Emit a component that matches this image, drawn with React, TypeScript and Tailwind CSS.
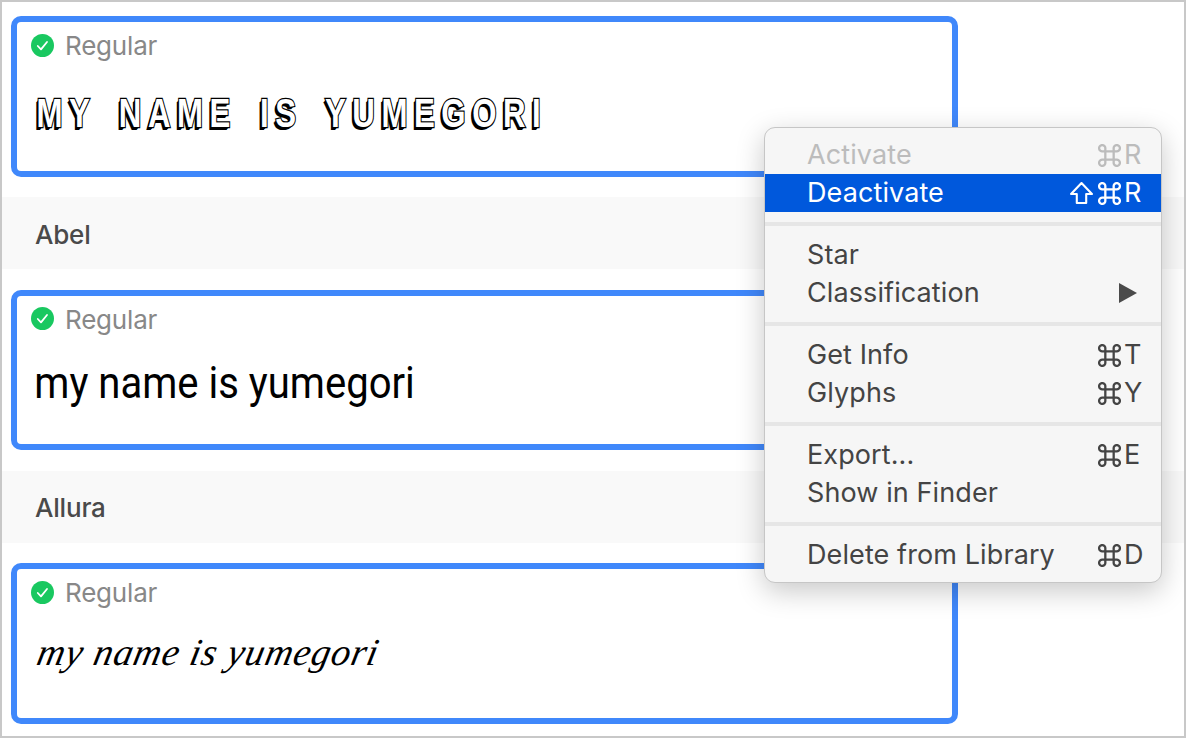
const ui = { fontFamily: 'Inter, "DejaVu Sans", sans-serif' };

function Check() {
  return (
    <svg width="23" height="23" viewBox="0 0 23 23" className="shrink-0">
      <circle cx="11.5" cy="11.5" r="11.5" fill="#19c860" />
      <path d="M6.8 12l3.2 3.4 6-7.4" fill="none" stroke="#fff" strokeWidth="1.8" strokeLinecap="round" strokeLinejoin="round" />
    </svg>
  );
}

function Card({ children }: { children: React.ReactNode }) {
  return (
    <div className="w-[947px] h-[160.5px] ml-[9px] border-[6px] border-[#4088fb] rounded-[10px] bg-white relative shrink-0">
      <div className="flex items-center gap-[11px] pl-[14px] pt-[7px]">
        <Check />
        <span className="text-[26px] leading-[30px] mt-[2px] text-[#888888] tracking-[-0.2px]">Regular</span>
      </div>
      {children}
    </div>
  );
}

function Header({ name }: { name: string }) {
  return (
    <div className="h-[72px] my-[20.5px] bg-[#f9f9f9] flex items-center pl-[33px] pt-[2px] text-[26px] font-medium text-[#4a4a4a] tracking-[-0.2px] shrink-0">
      {name}
    </div>
  );
}

function Row({ label, mods, k, state, arrow }: { label: string; mods?: string; k?: string; state?: 'disabled' | 'active'; arrow?: boolean }) {
  const color = state === 'disabled' ? 'text-[#bcbcbc]' : state === 'active' ? 'text-white bg-[#0058dc]' : 'text-[#444444]';
  return (
    <div className={`h-[38px] flex items-center justify-between pl-[42px] text-[27px] ${color}`}>
      <span className="tracking-[0.1px]">{label}</span>
      {arrow ? (
        <svg width="18" height="20" viewBox="0 0 18 20" className="mr-[24px]">
          <path d="M0 0L18 10L0 20Z" fill="#4a4a4a" />
        </svg>
      ) : k ? (
        <span className="flex items-center">
          {mods?.includes('s') && (
            <svg width="23" height="22" viewBox="1 1.5 22 21" className="mr-[5px]" fill="none" stroke="currentColor" strokeWidth="2" strokeLinejoin="round">
              <path d="M12 2.500L22 13H16.500V21.500H7.500V13H2Z" />
            </svg>
          )}
          <svg width="23" height="23" viewBox="1 1 22 22" fill="none" stroke="currentColor" strokeWidth="2.200">
            <path d="M8 8h8v8H8zM8 8H5.500A3 3 0 1 1 8 5.500zM16 8V5.500A3 3 0 1 1 18.500 8zM16 16h2.500A3 3 0 1 1 16 18.500zM8 16v2.500A3 3 0 1 1 5.500 16z" />
          </svg>
          <span className="w-[40px] pl-[3px]">{k}</span>
        </span>
      ) : null}
    </div>
  );
}

function Sep() {
  return <div className="h-[4px] my-[10px] bg-[#e6e6e6]" />;
}

export default function App() {
  return (
    <div className="w-[1186px] h-[738px] border-2 border-[#c8c8c8] bg-white relative overflow-hidden flex flex-col" style={ui}>
      <div className="h-[14px] shrink-0" />
      <Card>
        <div
          className="pl-[25px] mt-[29px] text-[40px] leading-[46px] font-bold text-white tracking-[8.400px] [word-spacing:10px] whitespace-nowrap origin-left scale-x-[0.78] [-webkit-text-stroke:2.500px_#000] [paint-order:stroke_fill] [text-shadow:-1px_1px_0_#000,-2px_2px_0_#000,-3px_3px_0_#000]"
          style={{ fontFamily: '"Liberation Sans", sans-serif' }}
        >
          MY NAME IS YUMEGORI
        </div>
      </Card>
      <Header name="Abel" />
      <Card>
        <div
          className="pl-[19px] mt-[23px] text-[44px] leading-[50px] text-black whitespace-nowrap origin-left scale-x-[0.91]"
          style={{ fontFamily: '"Liberation Sans Narrow", Roboto, sans-serif' }}
        >
          my name is yumegori
        </div>
      </Card>
      <Header name="Allura" />
      <Card>
        <div
          className="pl-[21px] mt-[22px] text-[38px] leading-[44px] italic text-black tracking-[0.900px] whitespace-nowrap origin-left -skew-x-12"
          style={{ fontFamily: '"Liberation Serif", serif' }}
        >
          my name is yumegori
        </div>
      </Card>

      <div className="absolute left-[762px] top-[125px] w-[398px] h-[456px] bg-[#f6f6f6] border border-[#c6c6c6] rounded-[11px] pt-[8px] shadow-[0_8px_28px_rgba(0,0,0,0.22)]">
        <Row label="Activate" k="R" state="disabled" />
        <Row label="Deactivate" mods="s" k="R" state="active" />
        <Sep />
        <Row label="Star" />
        <Row label="Classification" arrow />
        <Sep />
        <Row label="Get Info" k="T" />
        <Row label="Glyphs" k="Y" />
        <Sep />
        <Row label="Export..." k="E" />
        <Row label="Show in Finder" />
        <Sep />
        <Row label="Delete from Library" k="D" />
      </div>
    </div>
  );
}
